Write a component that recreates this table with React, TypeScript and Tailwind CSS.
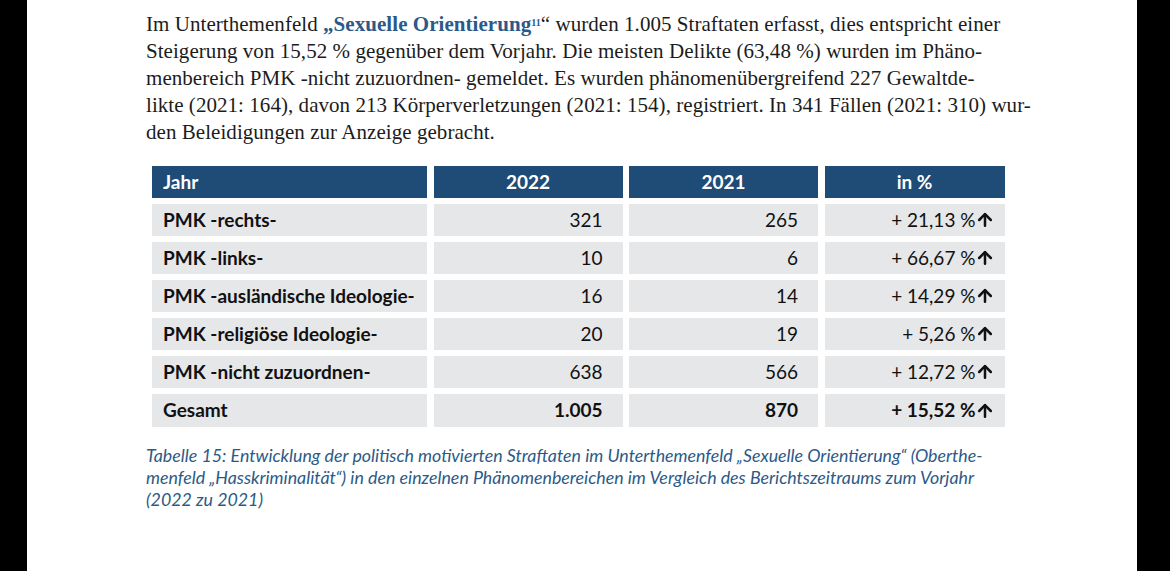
import { ArrowUp } from 'lucide-react';

const rows = [
    { label: "PMK -rechts-", y22: "321", y21: "265", pct: "+ 21,13 %" },
    { label: "PMK -links-", y22: "10", y21: "6", pct: "+ 66,67 %" },
    { label: "PMK -ausländische Ideologie-", y22: "16", y21: "14", pct: "+ 14,29 %" },
    { label: "PMK -religiöse Ideologie-", y22: "20", y21: "19", pct: "+ 5,26 %" },
    { label: "PMK -nicht zuzuordnen-", y22: "638", y21: "566", pct: "+ 12,72 %" },
]

const cols = "grid grid-cols-[275px_189px_189px_180px] gap-x-[6.5px]"

const App = () => {
    return (
        <div className="flex w-full h-[571px] bg-black">
            <div className="ml-[27px] w-[1110px] h-full bg-white pl-[119px] pt-[11px]">
                <p className="text-[21px] leading-[27px] text-[#1c1c1c] tracking-[0.05px]" style={{ fontFamily: '"Liberation Serif", serif' }}>
                    <span className="block whitespace-nowrap">
                        Im Unterthemenfeld <span className="font-bold text-[#2b5a8a]">„Sexuelle Orientierung<sup className="text-[10px]">11</sup></span>“ wurden 1.005 Straftaten erfasst, dies entspricht einer
                    </span>
                    <span className="block whitespace-nowrap">Steigerung von 15,52 % gegenüber dem Vorjahr. Die meisten Delikte (63,48 %) wurden im Phäno-</span>
                    <span className="block whitespace-nowrap">menbereich PMK -nicht zuzuordnen- gemeldet. Es wurden phänomenübergreifend 227 Gewaltde-</span>
                    <span className="block whitespace-nowrap">likte (2021: 164), davon 213 Körperverletzungen (2021: 154), registriert. In 341 Fällen (2021: 310) wur-</span>
                    <span className="block whitespace-nowrap">den Beleidigungen zur Anzeige gebracht.</span>
                </p>

                <div className="ml-[6px] mt-[20px] flex flex-col gap-y-[6px] text-[19px] text-[#111]" style={{ fontFamily: '"Lato", sans-serif' }}>
                    <div className={`${cols} h-[32px] font-bold text-white`}>
                        <div className="bg-[#1f4b77] flex items-center pl-[11px]">Jahr</div>
                        <div className="bg-[#1f4b77] flex items-center justify-center">2022</div>
                        <div className="bg-[#1f4b77] flex items-center justify-center">2021</div>
                        <div className="bg-[#1f4b77] flex items-center justify-center">in %</div>
                    </div>
                    {rows.map((r) => (
                        <div key={r.label} className={`${cols} h-[32px]`}>
                            <div className="bg-[#e6e7e9] flex items-center pl-[11px] font-bold">{r.label}</div>
                            <div className="bg-[#e6e7e9] flex items-center justify-end pr-[20px]">{r.y22}</div>
                            <div className="bg-[#e6e7e9] flex items-center justify-end pr-[20px]">{r.y21}</div>
                            <div className="bg-[#e6e7e9] flex items-center justify-end pr-[10px]">
                                {r.pct}<ArrowUp className="size-[20px] -ml-[1px]" strokeWidth={3} />
                            </div>
                        </div>
                    ))}
                    <div className={`${cols} h-[33px] font-bold`}>
                        <div className="bg-[#e6e7e9] flex items-center pl-[11px]">Gesamt</div>
                        <div className="bg-[#e6e7e9] flex items-center justify-end pr-[20px]">1.005</div>
                        <div className="bg-[#e6e7e9] flex items-center justify-end pr-[20px]">870</div>
                        <div className="bg-[#e6e7e9] flex items-center justify-end pr-[10px]">
                            + 15,52 %<ArrowUp className="size-[20px] -ml-[1px]" strokeWidth={3} />
                        </div>
                    </div>
                </div>

                <p className="mt-[17px] italic text-[17.8px] leading-[22px] text-[#2b5a87]" style={{ fontFamily: '"Lato", sans-serif' }}>
                    <span className="block whitespace-nowrap">Tabelle 15: Entwicklung der politisch motivierten Straftaten im Unterthemenfeld „Sexuelle Orientierung“ (Oberthe-</span>
                    <span className="block whitespace-nowrap">menfeld „Hasskriminalität“) in den einzelnen Phänomenbereichen im Vergleich des Berichtszeitraums zum Vorjahr</span>
                    <span className="block whitespace-nowrap">(2022 zu 2021)</span>
                </p>
            </div>
        </div>
    )
}

export default App
